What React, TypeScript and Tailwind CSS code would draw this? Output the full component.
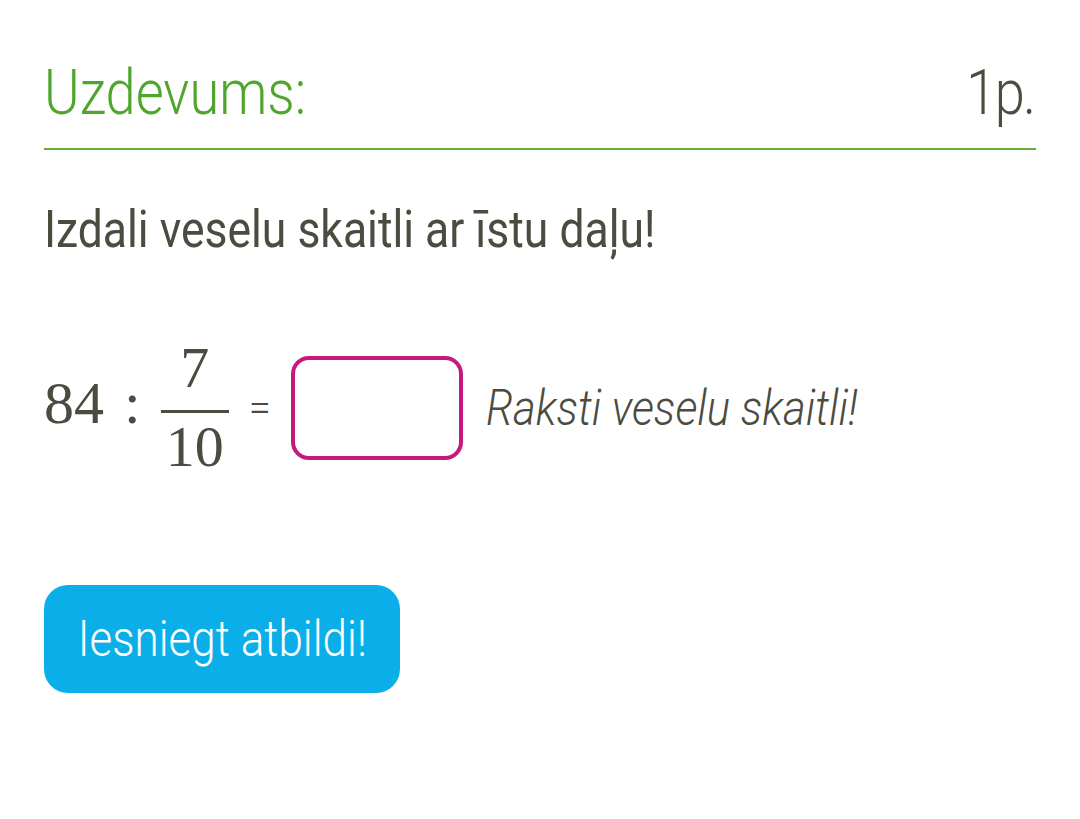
import React from "react";

export default function App() {
  return (
    <div className="w-[1080px] h-[819px] bg-white overflow-hidden" style={{ fontFamily: "Roboto, 'Noto Sans', sans-serif" }}>
      <div className="px-[44px] pt-[58px]">
        <div className="flex justify-between items-end border-b-2 border-[#6aad3b] pb-[20px]">
          <span className="inline-block origin-left scale-x-[0.86] text-[63px] leading-[70px] font-light text-[#50a62c]">Uzdevums:</span>
          <span className="inline-block origin-right scale-x-[0.86] text-[63px] leading-[70px] font-light text-[#4b4b3f] pr-[2px] tracking-[-2px]">1p.</span>
        </div>
        <div className="mt-[50px] text-[#4b4b3f] text-[52px] leading-[60px] font-normal">
          <span className="inline-block origin-left scale-x-[0.855] whitespace-nowrap">Izdali veselu skaitli ar īstu daļu!</span>
        </div>
        <div className="mt-[80px] flex items-center text-[#4b4b3f]">
          <div className="flex items-center" style={{ fontFamily: "'Liberation Serif', serif" }}>
            <span className="text-[60px] leading-none mb-[10px]">84</span>
            <span className="text-[60px] leading-none ml-[20px] mb-[10px]">:</span>
            <div className="flex flex-col items-center ml-[20px] w-[68px]">
              <span className="text-[58px] leading-[56px]">7</span>
              <div className="w-full h-[3px] bg-[#4b4b3f] mt-[14px] mb-[6px]" />
              <span className="text-[58px] leading-[56px]">10</span>
            </div>
          </div>
          <span className="ml-[20px] text-[40px] font-light leading-none">=</span>
          <div className="ml-[20px] w-[172px] h-[104px] border-[4px] border-[#c6197f] rounded-[18px]" />
          <span className="ml-[23px] inline-block origin-left scale-x-[0.875] italic font-light text-[50px] leading-none whitespace-nowrap">Raksti veselu skaitli!</span>
        </div>
        <div className="mt-[110px]">
          <button className="w-[356px] h-[108px] rounded-[24px] bg-[#0aafe9] text-white flex items-center justify-center">
            <span className="inline-block scale-x-[0.88] font-light text-[50px] leading-none whitespace-nowrap">Iesniegt atbildi!</span>
          </button>
        </div>
      </div>
    </div>
  );
}
